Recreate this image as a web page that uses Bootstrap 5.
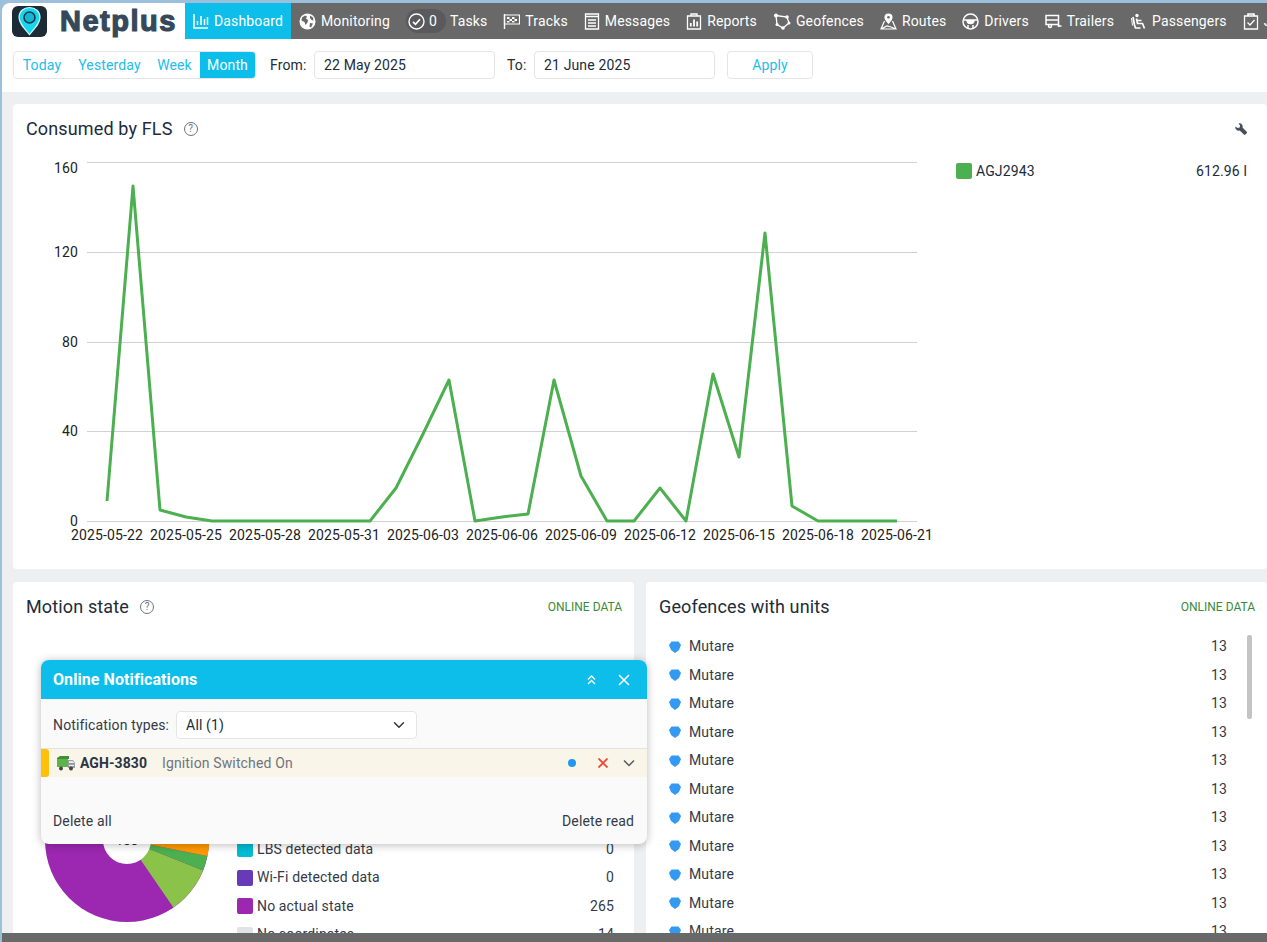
<!DOCTYPE html>
<html lang="en">
<head>
<meta charset="utf-8">
<title>Netplus Dashboard</title>
<link href="https://cdn.jsdelivr.net/npm/bootstrap@5.3.0/dist/css/bootstrap.min.css" rel="stylesheet">
<style>
html,body{height:100%;margin:0;overflow:hidden}
body{background:#9cc0d9;padding:3px 0 0 2px;font-family:Roboto,"Liberation Sans",sans-serif;font-size:14px;color:#212b3a;letter-spacing:.14px}
.shell{height:100%;background:#eeeff1;border-top-left-radius:8px;overflow:hidden}
.topbar{height:36px;flex:none}
.brand{width:183px;flex:none;background:#fff;padding-left:10px;gap:12px;border-top-left-radius:8px}
.brand-word{font-family:"Liberation Sans",sans-serif;font-weight:700;font-size:29px;letter-spacing:1.5px;color:#35495a;-webkit-text-stroke:1.2px #35495a;line-height:36px}
.navstrip{background:#696969;flex:1 1 auto;min-width:0;overflow:hidden;flex-wrap:nowrap}
.navstrip .nav-link{height:36px;padding:0 8px;color:#fff;display:flex;align-items:center;gap:5px;white-space:nowrap;flex:none;font-size:14px}
.navstrip .nav-link.active{background:#0dbeea}
.navstrip svg{flex:none}
.task-pill{background:#5a5a5e;border-radius:12px;height:24px;width:40px;padding-left:2px;gap:4px;margin-right:4px;margin-left:0}
.navstrip .task-link{gap:0}
.toolbar{height:53px;flex:none;background:#fff;padding:12px 0 13px 11px}
.range-group{border:1px solid #e3e5e8;border-radius:4px;height:28px;overflow:hidden;width:243px}
.toolbar .btn-group.range-group > .btn.btn{margin-left:0;border:0;border-radius:0;padding:0;font-size:14px;line-height:26px;color:#23bdea;background:transparent;flex:none;letter-spacing:.14px}
.toolbar .btn-group.range-group > .btn.btn:nth-child(1){width:56px}
.toolbar .btn-group.range-group > .btn.btn:nth-child(2){width:79px}
.toolbar .btn-group.range-group > .btn.btn:nth-child(3){width:51px}
.toolbar .btn-group.range-group > .btn.btn:nth-child(4){width:55px}
.toolbar .btn-group.range-group > .btn.btn.active{background:#0dbeea;color:#fff}
.tool-label{line-height:28px;flex:none}
.from-label{margin:0 0 0 14px;width:44px}
.to-label{margin:0 8px 0 12px;width:19px}
.date-field.form-control{width:181px;height:28px;min-height:28px;padding:0 9px;font-size:14px;border-color:#e3e5e8;color:#212b3a;border-radius:4px;flex:none;letter-spacing:.14px}
.apply-btn.btn{width:86px;height:28px;margin-left:12px;padding:0;font-size:14px;color:#23bdea;border:1px solid #e3e5e8;border-radius:4px;background:#fff;flex:none;letter-spacing:.14px}
.board{padding:12px 0 0 11px;flex:1 1 auto;min-height:0;overflow:hidden}
.panel-card.card{border:0;border-radius:4px;background:#fff;color:#212b3a}
.chart-card{height:465px;margin-bottom:13px;padding:13px 20px 0 13px}
.head-line{height:24px}
.head-title{font-size:18px;line-height:24px;font-weight:400;margin:0}
.help-mark{width:14px;height:14px;border:1px solid #6d7280;border-radius:50%;font-size:10px;line-height:12px;text-align:center;color:#6d7280;margin-left:11px;flex:none;letter-spacing:0}
.chart-wrap{margin-top:11px}
.chart-svg{display:block;flex:none}
.chart-svg text{font-family:Roboto,sans-serif;font-size:14px;fill:#212121}
.chart-legend{margin-left:18px;margin-top:11px;height:16px}
.swatch{width:16px;height:16px;border-radius:2px;flex:none;margin-right:4px}
.lower-row{display:grid;grid-template-columns:1fr 1fr;gap:12px;height:360px}
.lower-card{padding:13px 12px 0 13px;overflow:hidden}
.online-tag{font-size:12px;color:#3a8a3a;letter-spacing:0}
.motion-body{margin-top:6px}
.pie-svg{display:block;flex:none}
.motion-legend{margin-left:13px;margin-top:210px;margin-right:8px;flex:1 1 auto;min-width:0}
.data-row{height:28.5px;color:#343a48;font-size:14px}
.geo-body{margin-top:13.3px}
.geo-list{flex:1 1 auto;padding:0 0 0 10px;min-width:0}
.geo-icon{margin-right:8px;flex:none}
.scroll-rail{width:5px;margin:3px 3px 0 20px;flex:none}
.scroll-thumb{height:84px;background:#c4c4c4;border-radius:2px}
.foot-bar{height:9px;background:#696969;flex:none}
.notif{position:absolute;left:41px;top:660px;width:606px;height:184px;background:#fafafa;border-radius:8px;box-shadow:0 1px 8px rgba(0,0,0,.28);overflow:hidden;color:#343a48}
.notif-head{height:39px;background:#0dbeea;color:#fff;padding:0 17px 0 12px}
.notif-title{font-size:16px;font-weight:700;letter-spacing:.08px}
.notif-filter{height:49px;padding:12px 0 9px 12px}
.notif-filter .form-select{width:241px;height:28px;min-height:28px;margin-left:7px;padding:0 9px;font-size:14px;border-color:#e3e5e8;border-radius:4px;background-position:right 9px center;color:#212b3a;letter-spacing:.14px}
.notif-row{height:29px;background:#f9f5e9;border-top:1px solid #e2e3e5;padding-right:12px}
.flag-bar{width:8px;height:100%;background:#ffc107;border-radius:0 3px 3px 0;flex:none;margin-right:8px}
.unit-name{font-weight:700;margin:0 15px 0 5px;color:#2c3444;letter-spacing:.08px}
.event-text{color:#6f7480}
.notif-foot{padding:34px 13px 0 12px}
</style>
</head>
<body>
<div class="shell d-flex flex-column">
  <header class="topbar d-flex">
    <div class="brand d-flex align-items-center">
      <svg width="36" height="31" viewBox="0 0 36 31" aria-hidden="true">
        <rect x="0" y="0" width="35" height="31" rx="6" fill="#1d2b36"/>
        <path d="M17.500 28.500C12 22 7 17 7 11.500C7 5.500 11.700 1.500 17.500 1.500C23.300 1.500 28 5.500 28 11.500C28 17 23 22 17.500 28.500Z" fill="#19d6f0" stroke="#c9f4fa" stroke-width="1.200"/>
        <circle cx="17.500" cy="11.500" r="5.500" fill="#12b5d3" stroke="#123a48" stroke-width="1.500"/>
      </svg>
      <span class="brand-word">Netplus</span>
    </div>
    <nav class="nav navstrip">
      <a class="nav-link active" href="#">
        <svg width="16" height="16" viewBox="0 0 16 16" fill="none" stroke="#fff" stroke-width="1.500"><path d="M1 1v14h14"/><path d="M4.500 12V8M8 12V3M11.500 12V6M14.500 12V4"/></svg>Dashboard</a>
      <a class="nav-link" href="#">
        <svg width="17" height="17" viewBox="0 0 17 17"><circle cx="8.500" cy="8.500" r="8" fill="#fff"/><path d="M3 4.500l3-2 2 1-1 2 2 1.500-.5 2.500-2 2.500-1-3-3-1.500zM11 2.500l3 2 .5 3-2-.5-1.500-2zM11 10l3 .5-2 4-1.500-1z" fill="#696969"/></svg>Monitoring</a>
      <a class="nav-link task-link" href="#">
        <span class="task-pill d-flex align-items-center">
          <svg width="17" height="17" viewBox="0 0 17 17" fill="none" stroke="#fff" stroke-width="1.400"><circle cx="8.500" cy="8.500" r="7.500"/><path d="M5 8.800l2.500 2.500 4.500-5" stroke-width="1.700"/></svg>0</span>Tasks</a>
      <a class="nav-link" href="#">
        <svg width="17" height="17" viewBox="0 0 17 17" fill="none" stroke="#fff"><path d="M1.500 1v15" stroke-width="1.400"/><path d="M1.500 2h15v9h-15z" stroke-width="1.200"/><path d="M4 4h2.500v2H4zM9 4h2.500v2H9zM6.500 6H9v2H6.500zM11.500 6H14v2h-2.500zM4 8h2.500v1.500H4zM9 8h2.500v1.500H9z" fill="#fff" stroke="none"/></svg>Tracks</a>
      <a class="nav-link" href="#">
        <svg width="16" height="17" viewBox="0 0 16 17" fill="none" stroke="#fff" stroke-width="1.300"><path d="M1.500 1h13v15h-13z"/><path d="M1.500 3.500h13M4 7h8M4 10h8M4 13h8"/></svg>Messages</a>
      <a class="nav-link" href="#">
        <svg width="16" height="17" viewBox="0 0 16 17" fill="none" stroke="#fff" stroke-width="1.300"><path d="M1.500 3h13v13h-13z"/><path d="M5 3V1h6v2" /><path d="M4.800 13.500V10M8 13.500V6.500M11.200 13.500V8.500" stroke-width="1.800"/></svg>Reports</a>
      <a class="nav-link" href="#">
        <svg width="18" height="17" viewBox="0 0 18 17" fill="none" stroke="#fff" stroke-width="1.300"><path d="M3 2.500l11 1.500 2 6-6 5-6-3.500z"/><g fill="#fff" stroke="none"><circle cx="3" cy="2.500" r="2"/><circle cx="14" cy="4" r="1.800"/><circle cx="16" cy="10" r="1.500"/><circle cx="10" cy="15" r="1.800"/><circle cx="4" cy="11.500" r="1.500"/></g></svg>Geofences</a>
      <a class="nav-link" href="#">
        <svg width="17" height="17" viewBox="0 0 17 17" fill="none" stroke="#fff" stroke-width="1.200"><path d="M8.500 1C6.300 1 5 2.600 5 4.400c0 2 2.300 4.300 3.500 5.800C9.700 8.700 12 6.400 12 4.400 12 2.600 10.700 1 8.500 1z" fill="#fff"/><circle cx="8.500" cy="4.300" r="1.300" fill="#696969" stroke="none"/><path d="M4.500 8L1 16h15l-3.500-8M1 16l6-3 4 1 5 2"/></svg>Routes</a>
      <a class="nav-link" href="#">
        <svg width="17" height="17" viewBox="0 0 17 17" fill="none" stroke="#fff" stroke-width="1.500"><circle cx="8.500" cy="8.500" r="7.500"/><path d="M1.500 7h14M5 7c0 3 1 3.500 3.500 3.500S12 10 12 7" fill="#fff"/><path d="M6 15v-3M11 15v-3"/></svg>Drivers</a>
      <a class="nav-link" href="#">
        <svg width="17" height="17" viewBox="0 0 17 17" fill="none" stroke="#fff" stroke-width="1.500"><path d="M1 2.500h12.500v9H1z"/><path d="M1 7h12.500" /><circle cx="5" cy="13" r="1.500" fill="#696969"/><path d="M13.500 11.500V14M13.500 13h3"/></svg>Trailers</a>
      <a class="nav-link" href="#">
        <svg width="17" height="17" viewBox="0 0 17 17" fill="none" stroke="#fff" stroke-width="1.700"><circle cx="7" cy="2.500" r="1.700" fill="#fff" stroke="none"/><path d="M6.500 5.500l1 5h5l2 5"/><path d="M7 7.500h4.500"/><path d="M3 4l1.500 8 1 3h5"/><path d="M1.500 5l1 7.500"  stroke-width="1"/></svg>Passengers</a>
      <a class="nav-link" href="#">
        <svg width="16" height="17" viewBox="0 0 16 17" fill="none" stroke="#fff" stroke-width="1.300"><path d="M1.500 3h13v13h-13z"/><path d="M5 3V1h6v2" stroke-width="1.600"/><path d="M4.500 9.500l2.500 2.500 4.500-5"/></svg>Jobs</a>
    </nav>
  </header>

  <section class="toolbar d-flex align-items-start">
    <div class="btn-group range-group flex-shrink-0" role="group">
      <button type="button" class="btn">Today</button>
      <button type="button" class="btn">Yesterday</button>
      <button type="button" class="btn">Week</button>
      <button type="button" class="btn active">Month</button>
    </div>
    <label class="tool-label from-label">From:</label>
    <input class="form-control date-field" value="22 May 2025">
    <label class="tool-label to-label">To:</label>
    <input class="form-control date-field" value="21 June 2025">
    <button type="button" class="btn apply-btn">Apply</button>
  </section>

  <main class="board">
    <div class="card panel-card chart-card">
      <div class="head-line d-flex align-items-center">
        <h2 class="head-title">Consumed by FLS</h2>
        <span class="help-mark">?</span>
        <svg class="ms-auto" width="12" height="12" viewBox="0 0 12 12" aria-hidden="true"><path transform="matrix(-1 0 0 1 12 0)" d="M7.500.300a3.200 3.200 0 0 0-3 4.300L.300 8.800a1 1 0 0 0 0 1.400l1.400 1.400a1 1 0 0 0 1.400 0l4.200-4.200a3.200 3.200 0 0 0 4.200-4L9.500 5 7.300 4.500 6.900 2.500 8.500.500z" fill="#4a4f59"/></svg>
      </div>
      <div class="chart-wrap d-flex align-items-start">
        <svg class="chart-svg" width="912" height="400" viewBox="26 152 912 400" role="img" aria-label="Consumed by FLS chart">
          <g stroke="#cfd1d4" stroke-width="1">
            <path d="M87 162.500H917M87 252.500H917M87 342.500H917M87 431.500H917M87 521.500H917"/>
          </g>
          <g text-anchor="end">
            <text x="78" y="173">160</text>
            <text x="78" y="257">120</text>
            <text x="78" y="347">80</text>
            <text x="78" y="436">40</text>
            <text x="78" y="526">0</text>
          </g>
          <g text-anchor="middle">
            <text x="107" y="540">2025-05-22</text>
            <text x="186" y="540">2025-05-25</text>
            <text x="265" y="540">2025-05-28</text>
            <text x="344" y="540">2025-05-31</text>
            <text x="423" y="540">2025-06-03</text>
            <text x="502" y="540">2025-06-06</text>
            <text x="581" y="540">2025-06-09</text>
            <text x="660" y="540">2025-06-12</text>
            <text x="739" y="540">2025-06-15</text>
            <text x="818" y="540">2025-06-18</text>
            <text x="897" y="540">2025-06-21</text>
          </g>
          <polyline fill="none" stroke="#4caf50" stroke-width="3" stroke-linejoin="round" points="107,501 133,186 160,510 186,517 212,521 239,521 265,521 291,521 318,521 344,521 370,521 396,488 423,434 449,380 475,521 502,517 528,514 554,380 581,476 607,521 634,521 660,488 686,521 713,374 739,457 765,233 792,506 818,521 844,521 871,521 897,521"/>
        </svg>
        <div class="chart-legend d-flex align-items-center flex-grow-1">
          <span class="swatch" style="background:#4caf50"></span>
          <span>AGJ2943</span>
          <span class="ms-auto">612.96 l</span>
        </div>
      </div>
    </div>

    <div class="lower-row">
      <div class="card panel-card lower-card">
        <div class="head-line d-flex align-items-center">
          <h2 class="head-title">Motion state</h2>
          <span class="help-mark">?</span>
          <span class="online-tag ms-auto">ONLINE DATA</span>
        </div>
        <div class="motion-body d-flex align-items-start">
          <svg class="pie-svg" width="198" height="310" viewBox="26 625 198 310" role="img" aria-label="Motion state chart">
            <circle cx="127" cy="840" r="82" fill="#9c27b0"/>
            <path d="M127 840L173.400 907.600A82 82 0 0 0 203.100 870.500Z" fill="#8bc34a"/>
            <path d="M127 840L203.100 870.500A82 82 0 0 0 207.400 856.100Z" fill="#4caf50"/>
            <path d="M127 840L207.400 856.100A82 82 0 0 0 209 830Z" fill="#ff9800"/>
            <circle cx="127" cy="840" r="24" fill="#fff"/>
            <text x="127" y="845" text-anchor="middle" font-family="Roboto,sans-serif" font-size="13" fill="#212121">100</text>
          </svg>
          <div class="motion-legend">
            <div class="data-row d-flex align-items-center"><span class="swatch" style="background:#00bcd4"></span>LBS detected data<span class="ms-auto">0</span></div>
            <div class="data-row d-flex align-items-center"><span class="swatch" style="background:#673ab7"></span>Wi-Fi detected data<span class="ms-auto">0</span></div>
            <div class="data-row d-flex align-items-center"><span class="swatch" style="background:#9c27b0"></span>No actual state<span class="ms-auto">265</span></div>
            <div class="data-row d-flex align-items-center"><span class="swatch" style="background:#e0e3e8"></span>No coordinates<span class="ms-auto">14</span></div>
          </div>
        </div>
      </div>

      <div class="card panel-card lower-card">
        <div class="head-line d-flex align-items-center">
          <h2 class="head-title">Geofences with units</h2>
          <span class="online-tag ms-auto">ONLINE DATA</span>
        </div>
        <div class="geo-body d-flex align-items-start">
          <div class="geo-list">
            <div class="data-row d-flex align-items-center"><svg class="geo-icon" width="12" height="12" viewBox="0 0 12 12"><path d="M2.500 0.500h7l2.500 3.500-2 5L6 12 2 9 0 4z" fill="#3399f3"/></svg>Mutare<span class="ms-auto">13</span></div>
            <div class="data-row d-flex align-items-center"><svg class="geo-icon" width="12" height="12" viewBox="0 0 12 12"><path d="M2.500 0.500h7l2.500 3.500-2 5L6 12 2 9 0 4z" fill="#3399f3"/></svg>Mutare<span class="ms-auto">13</span></div>
            <div class="data-row d-flex align-items-center"><svg class="geo-icon" width="12" height="12" viewBox="0 0 12 12"><path d="M2.500 0.500h7l2.500 3.500-2 5L6 12 2 9 0 4z" fill="#3399f3"/></svg>Mutare<span class="ms-auto">13</span></div>
            <div class="data-row d-flex align-items-center"><svg class="geo-icon" width="12" height="12" viewBox="0 0 12 12"><path d="M2.500 0.500h7l2.500 3.500-2 5L6 12 2 9 0 4z" fill="#3399f3"/></svg>Mutare<span class="ms-auto">13</span></div>
            <div class="data-row d-flex align-items-center"><svg class="geo-icon" width="12" height="12" viewBox="0 0 12 12"><path d="M2.500 0.500h7l2.500 3.500-2 5L6 12 2 9 0 4z" fill="#3399f3"/></svg>Mutare<span class="ms-auto">13</span></div>
            <div class="data-row d-flex align-items-center"><svg class="geo-icon" width="12" height="12" viewBox="0 0 12 12"><path d="M2.500 0.500h7l2.500 3.500-2 5L6 12 2 9 0 4z" fill="#3399f3"/></svg>Mutare<span class="ms-auto">13</span></div>
            <div class="data-row d-flex align-items-center"><svg class="geo-icon" width="12" height="12" viewBox="0 0 12 12"><path d="M2.500 0.500h7l2.500 3.500-2 5L6 12 2 9 0 4z" fill="#3399f3"/></svg>Mutare<span class="ms-auto">13</span></div>
            <div class="data-row d-flex align-items-center"><svg class="geo-icon" width="12" height="12" viewBox="0 0 12 12"><path d="M2.500 0.500h7l2.500 3.500-2 5L6 12 2 9 0 4z" fill="#3399f3"/></svg>Mutare<span class="ms-auto">13</span></div>
            <div class="data-row d-flex align-items-center"><svg class="geo-icon" width="12" height="12" viewBox="0 0 12 12"><path d="M2.500 0.500h7l2.500 3.500-2 5L6 12 2 9 0 4z" fill="#3399f3"/></svg>Mutare<span class="ms-auto">13</span></div>
            <div class="data-row d-flex align-items-center"><svg class="geo-icon" width="12" height="12" viewBox="0 0 12 12"><path d="M2.500 0.500h7l2.500 3.500-2 5L6 12 2 9 0 4z" fill="#3399f3"/></svg>Mutare<span class="ms-auto">13</span></div>
            <div class="data-row d-flex align-items-center"><svg class="geo-icon" width="12" height="12" viewBox="0 0 12 12"><path d="M2.500 0.500h7l2.500 3.500-2 5L6 12 2 9 0 4z" fill="#3399f3"/></svg>Mutare<span class="ms-auto">13</span></div>
          </div>
          <div class="scroll-rail"><div class="scroll-thumb"></div></div>
        </div>
      </div>
    </div>
  </main>
  <div class="foot-bar"></div>
</div>

<aside class="notif">
  <div class="notif-head d-flex align-items-center">
    <span class="notif-title">Online Notifications</span>
    <svg class="ms-auto" width="11" height="12" viewBox="0 0 11 12" fill="none" stroke="#fff" stroke-width="1.300"><path d="M2 5.500L5.500 2 9 5.500M2 10L5.500 6.500 9 10"/></svg>
    <svg style="margin-left:21px" width="12" height="12" viewBox="0 0 12 12" fill="none" stroke="#fff" stroke-width="1.500"><path d="M1 1l10 10M11 1L1 11"/></svg>
  </div>
  <div class="notif-filter d-flex align-items-center">
    <label>Notification types:</label>
    <select class="form-select"><option>All (1)</option></select>
  </div>
  <div class="notif-row d-flex align-items-center">
    <span class="flag-bar"></span>
    <svg width="18" height="15" viewBox="0 0 18 15" aria-hidden="true"><path d="M0 2l3-2h9v3H0z" fill="#3f8f36"/><path d="M0 3h11v8H0z" fill="#5fb34c"/><path d="M11 4h5l2 3v5h-7z" fill="#9a9da1"/><path d="M12 5h4l1 2h-5z" fill="#e3e8ec"/><path d="M12 9h5v1h-5z" fill="#f0f0f0"/><circle cx="4" cy="12.500" r="2" fill="#444"/><circle cx="14" cy="12.500" r="2" fill="#444"/></svg>
    <span class="unit-name">AGH-3830</span>
    <span class="event-text">Ignition Switched On</span>
    <svg class="ms-auto" width="8" height="8" viewBox="0 0 8 8"><circle cx="4" cy="4" r="4" fill="#2196f3"/></svg>
    <svg style="margin-left:22px" width="10" height="10" viewBox="0 0 10 10" fill="none" stroke="#f44336" stroke-width="1.800"><path d="M.5.500l9 9M9.500.500l-9 9"/></svg>
    <svg style="margin-left:15px" width="12" height="8" viewBox="0 0 12 8" fill="none" stroke="#565b66" stroke-width="1.500"><path d="M1 1.500l5 5 5-5"/></svg>
  </div>
  <div class="notif-foot d-flex justify-content-between">
    <span>Delete all</span>
    <span>Delete read</span>
  </div>
</aside>

<script src="https://cdn.jsdelivr.net/npm/bootstrap@5.3.0/dist/js/bootstrap.bundle.min.js"></script>
</body>
</html>
